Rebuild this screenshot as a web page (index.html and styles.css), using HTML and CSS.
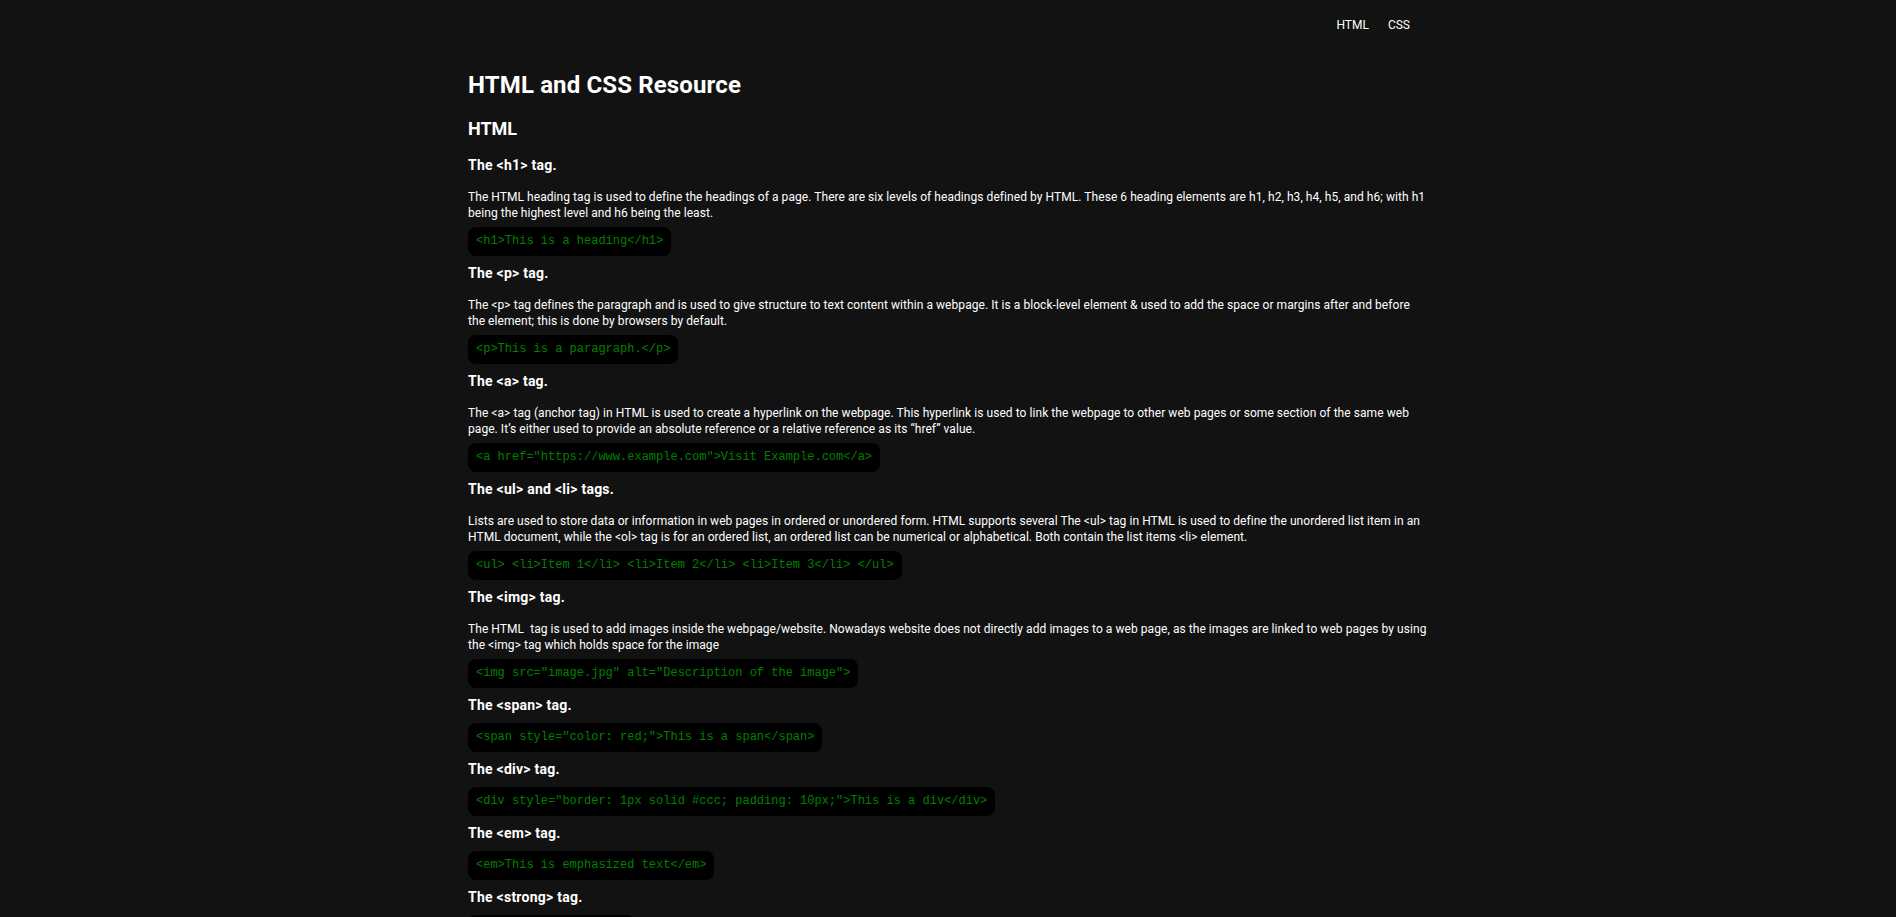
FILE: index.html
```html
<!DOCTYPE html>
<html lang="en">
<head>
<meta charset="utf-8">
<title>HTML and CSS Resource</title>
<link rel="stylesheet" href="styles.css">
</head>
<body>
<header class="site-header">
  <nav class="nav">
    <a class="nav-link" href="#html">HTML</a>
    <a class="nav-link" href="#css">CSS</a>
  </nav>
</header>
<main class="content">
  <h1 class="page-title">HTML and CSS Resource</h1>
  <section class="group" id="html">
    <h2 class="group-title">HTML</h2>

    <h3 class="topic">The &lt;h1&gt; tag.</h3>
    <p class="desc">The HTML heading tag is used to define the headings of a page. There are six levels of headings defined by HTML. These 6 heading elements are h1, h2, h3, h4, h5, and h6; with h1 being the highest level and h6 being the least.</p>
    <pre class="code">&lt;h1&gt;This is a heading&lt;/h1&gt;</pre>

    <h3 class="topic">The &lt;p&gt; tag.</h3>
    <p class="desc">The &lt;p&gt; tag defines the paragraph and is used to give structure to text content within a webpage. It is a block-level element &amp; used to add the space or margins after and before the element; this is done by browsers by default.</p>
    <pre class="code">&lt;p&gt;This is a paragraph.&lt;/p&gt;</pre>

    <h3 class="topic">The &lt;a&gt; tag.</h3>
    <p class="desc">The &lt;a&gt; tag (anchor tag) in HTML is used to create a hyperlink on the webpage. This hyperlink is used to link the webpage to other web pages or some section of the same web page. It’s either used to provide an absolute reference or a relative reference as its “href” value.</p>
    <pre class="code">&lt;a href="https://www.example.com"&gt;Visit Example.com&lt;/a&gt;</pre>

    <h3 class="topic">The &lt;ul&gt; and &lt;li&gt; tags.</h3>
    <p class="desc">Lists are used to store data or information in web pages in ordered or unordered form. HTML supports several The &lt;ul&gt; tag in HTML is used to define the unordered list item in an HTML document, while the &lt;ol&gt; tag is for an ordered list, an ordered list can be numerical or alphabetical. Both contain the list items &lt;li&gt; element.</p>
    <pre class="code">&lt;ul&gt; &lt;li&gt;Item 1&lt;/li&gt; &lt;li&gt;Item 2&lt;/li&gt; &lt;li&gt;Item 3&lt;/li&gt; &lt;/ul&gt;</pre>

    <h3 class="topic">The &lt;img&gt; tag.</h3>
    <p class="desc">The HTML &nbsp;tag is used to add images inside the webpage/website. Nowadays website does not directly add images to a web page, as the images are linked to web pages by using the &lt;img&gt; tag which holds space for the image</p>
    <pre class="code">&lt;img src="image.jpg" alt="Description of the image"&gt;</pre>

    <h3 class="topic">The &lt;span&gt; tag.</h3>
    <pre class="code">&lt;span style="color: red;"&gt;This is a span&lt;/span&gt;</pre>

    <h3 class="topic">The &lt;div&gt; tag.</h3>
    <pre class="code">&lt;div style="border: 1px solid #ccc; padding: 10px;"&gt;This is a div&lt;/div&gt;</pre>

    <h3 class="topic">The &lt;em&gt; tag.</h3>
    <pre class="code">&lt;em&gt;This is emphasized text&lt;/em&gt;</pre>

    <h3 class="topic">The &lt;strong&gt; tag.</h3>
    <pre class="code">&lt;strong&gt;Bold&lt;/strong&gt;</pre>
  </section>
  <section class="group" id="css">
    <h2 class="group-title">CSS</h2>
    <h3 class="topic">The color property.</h3>
    <p class="desc">The color property sets the foreground color of an element's text content.</p>
    <pre class="code">p { color: blue; }</pre>
  </section>
</main>
</body>
</html>
```

FILE: styles.css
```css
html, body {
  margin: 0;
  padding: 0;
}

body {
  background: #121212;
  color: #ffffff;
  font-family: Roboto, "Liberation Sans", sans-serif;
  font-size: 12px;
  line-height: 16px;
}

.site-header {
  padding: 17px 0 20px;
}

.nav {
  width: 960px;
  margin: 0 auto;
  display: flex;
  justify-content: flex-end;
  gap: 19px;
  padding-right: 18px;
  box-sizing: border-box;
}

.nav-link {
  color: #ffffff;
  text-decoration: none;
  font-size: 12px;
  line-height: 16px;
}

.content {
  width: 960px;
  margin: 0 auto;
}

.page-title {
  font-size: 24px;
  line-height: 32px;
  font-weight: 700;
  letter-spacing: 0.14px;
  margin: 16px 0;
}

.group-title {
  font-size: 18px;
  line-height: 24px;
  font-weight: 700;
  margin: 16px 0 15px;
}

.topic {
  font-size: 14px;
  line-height: 19px;
  font-weight: 700;
  letter-spacing: 0.25px;
  margin: 8px 0;
}

.desc {
  margin: 14px 0 6px;
  letter-spacing: 0.06px;
}

.code {
  width: fit-content;
  margin: 6px 0 8px;
  padding: 8px;
  background: #000000;
  color: #008000;
  font-family: "Liberation Mono", "Courier New", monospace;
  font-size: 12px;
  line-height: 13px;
  border-radius: 8px;
  white-space: pre;
}
```
